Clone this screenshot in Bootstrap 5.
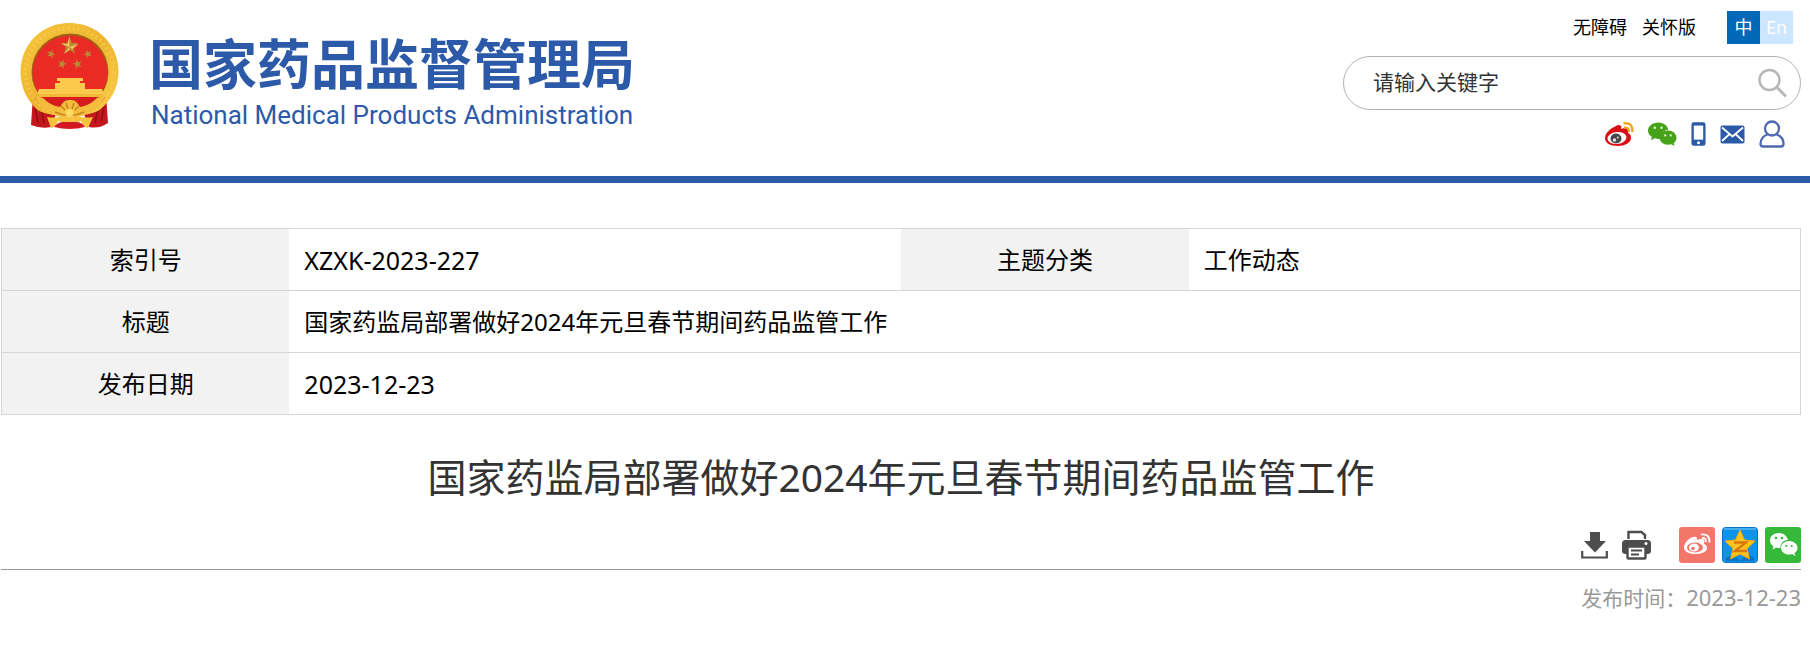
<!DOCTYPE html>
<html lang="zh-CN">
<head>
<meta charset="utf-8">
<meta name="viewport" content="width=device-width, initial-scale=1">
<title>国家药监局部署做好2024年元旦春节期间药品监管工作</title>
<link href="https://cdn.jsdelivr.net/npm/bootstrap@5.3.0/dist/css/bootstrap.min.css" rel="stylesheet">
<style>
body { font-family: "Noto Sans", "Noto Sans CJK SC", sans-serif; color: #000; background: #fff; }
a { color: inherit; text-decoration: none; }
svg { display: block; }
.site-head { border-bottom: 7px solid #2c5aa9; min-height: 183px; padding: 11px 9px 0 20px; }
.brand { padding-top: 11px; gap: 30px; color: #2c5aa9; }
.brand-zh { font: 700 54px/60px "Noto Sans CJK SC", sans-serif; margin-top: 10px; }
.brand-en { font: 400 26px/32px Roboto, "Liberation Sans", sans-serif; margin-top: 7px; padding-left: 2px; }
.tools { width: 458px; }
.top-links { font-size: 18px; line-height: 33px; gap: 15px; padding-right: 8px; }
.lang { margin-left: 16px; }
.lang a { width: 33px; height: 33px; line-height: 33px; text-align: center; color: #fff; background: #cce6ff; }
.lang a.on { background: #0068b7; }
.search-box { height: 54px; border: 1px solid #b3b3b3; border-radius: 27px; margin-top: 12px; padding: 0 13px 0 29px; }
.search-box input { font-size: 21px; border: 0; outline: 0; padding: 0; background: none; min-width: 0; color: #333; }
.search-box input::placeholder { color: #333; opacity: 1; }
.search-box button { border: 0; background: none; padding: 0; }
.social { margin-top: 10px; height: 28px; padding-right: 16px; gap: 14px; }
.article { padding: 45px 9px 0 1px; }
.info { font-size: 24px; table-layout: fixed; border: 1px solid #d5d5d5; margin: 0; }
.info th, .info td { height: 62px; line-height: 32px; padding: 0 15px; vertical-align: middle; border-bottom: 1px solid #d5d5d5; color: #000; font-weight: 400; }
.info th { background: #f2f2f2; text-align: center; }
.info .num { font-size: 25px; }
.headline { font-size: 39px; line-height: 52px; font-weight: 400; color: #333; margin: 36px 0 0; }
.acts { border-bottom: 1px solid #999; margin-top: 24px; padding-bottom: 6px; gap: 14px; }
.acts button { border: 0; background: none; padding: 0; }
.share { gap: 7px; padding-left: 14px; }
.pub { font-size: 21px; line-height: 32px; color: #999; margin: 11px 0 0; }
.pub time { font-size: 22px; }
</style>
</head>
<body>
<svg width="0" height="0" class="position-absolute" aria-hidden="true">
  <defs>
    <polygon id="star" points="0,-10 2.4,-3.2 9.5,-3.1 3.8,1.2 5.9,8.1 0,4 -5.9,8.1 -3.8,1.2 -9.5,-3.1 -2.4,-3.2"/>
    <linearGradient id="gold" x1="0" y1="0" x2="1" y2="1"><stop offset="0" stop-color="#f7c63c"/><stop offset=".5" stop-color="#eeb430"/><stop offset="1" stop-color="#f8ce4a"/></linearGradient>
  </defs>
</svg>

<header class="site-head d-flex justify-content-between align-items-start">
  <a href="#" class="brand d-flex align-items-start">
    <svg width="99" height="107" viewBox="0 0 99 107" role="img" aria-label="国徽">
      <path d="M13 73L11 103q10 4 20 2l5-13h28l5 13q10 2 19-4L86 73z" fill="#c4161c"/>
      <path d="M15 84l3 17M21 86l3 15M84 84l-3 15M78 86l-3 15" stroke="#8f1015" stroke-width="1.5"/>
      <path d="M49.5 1C22 1 .5 22 .5 50c0 16 7 29 17 38 14 8 48 8 62 0 11-9 19-22 19-38C98.500 22 77 1 49.500 1z" fill="url(#gold)"/>
      <circle cx="49.500" cy="50" r="44" fill="none" stroke="#f9cf55" stroke-width="4" stroke-dasharray="2 3" opacity=".6"/>
      <circle cx="50" cy="50" r="38.500" fill="#9c6414"/>
      <circle cx="50" cy="51" r="37.500" fill="#e92a25"/>
      <g fill="#b98b35"><use href="#star" transform="translate(49.500 24) scale(.93)"/><use href="#star" transform="translate(31 32) rotate(20) scale(.45)"/><use href="#star" transform="translate(68 32) rotate(-20) scale(.45)"/><use href="#star" transform="translate(42 42) rotate(15) scale(.5)"/><use href="#star" transform="translate(57.500 42) rotate(-15) scale(.5)"/></g>
      <g fill="#f3c85b"><path d="M49.500 14v11l-8.500-3.500 6.500.5zM49.500 25l-5.500 7 5.500-4zM49.500 25l9-3-6 5z"/></g>
      <path d="M37 56h26v3h-3v2h5v6h17l2 5H17l2-5h16v-6h5v-2h-3z" fill="#fbc94b"/>
      <path d="M19 72h64v3H19z" fill="#f2b838"/>
      <path d="M15 75h70q-4 8-12 13H27q-8-5-12-13z" fill="#d61d1d"/>
      <path d="M14 73l9 3q8 8 17 9 4-8 10-7 6-1 10 7 9-1 17-9l9-3-7 12q-15 10-29 12-16-2-29-12z" fill="#f4bd3c"/>
      <path d="M27 95q12 2 23-3 11 5 23 3l-5 11q-5-1-7-7-5 2-11 2t-12-2q-2 6-7 7z" fill="#f6c23f"/>
      <path d="M34 105q4-5 9-5h13q6 0 9 5-15 4-31 0z" fill="#d21b20"/>
      <path d="M41 84l4 4M46 81l2 6M54 81l-2 6M59 84l-4 4M35 90q15 7 29 0" fill="none" stroke="#c78521" stroke-width="1.500"/>
      <circle cx="49.500" cy="91" r="4" fill="#ffda68"/>
    </svg>
    <span class="d-block">
      <span class="brand-zh d-block">国家药品监督管理局</span>
      <span class="brand-en d-block">National Medical Products Administration</span>
    </span>
  </a>

  <div class="tools">
    <nav class="top-links d-flex justify-content-end">
      <a href="#">无障碍</a>
      <a href="#">关怀版</a>
      <span class="lang d-flex"><a class="on" href="#">中</a><a href="#">En</a></span>
    </nav>
    <form class="search-box d-flex align-items-center">
      <input class="flex-grow-1" type="text" placeholder="请输入关键字" aria-label="请输入关键字">
      <button type="button" aria-label="搜索">
        <svg width="29" height="30" viewBox="0 0 29 30" fill="none" stroke="#b7b7b7"><circle cx="11.500" cy="12" r="10" stroke-width="2.500"/><path d="M19 19.500l9 9" stroke-width="3"/></svg>
      </button>
    </form>
    <div class="social d-flex align-items-center justify-content-end">
      <a href="#" aria-label="微博">
        <svg width="29" height="26" viewBox="0 0 29 26">
          <path d="M11 5q3-2 5 0 1 1 0 3 5-2 7 0 1 1 0 4 3 1 3 5c0 5-7 8-13 8C5 25 0 22 0 17 0 12 6 7 11 5z" fill="#dc0d12"/>
          <ellipse cx="12" cy="17" rx="9.500" ry="6" fill="#fff" transform="rotate(-6 12 17)"/>
          <ellipse cx="11" cy="17.500" rx="5.500" ry="5" fill="#484848"/><circle cx="9.500" cy="19" r="1.800" fill="#ddd"/><circle cx="12.800" cy="16.500" r="1" fill="#ddd"/>
          <path d="M18.500 2.500q9-2 9 8.500M19 6.800q5-1 5 4" fill="none" stroke="#efa81c" stroke-width="2.400"/>
        </svg>
      </a>
      <a href="#" aria-label="微信">
        <svg width="29" height="26" viewBox="0 0 30 26">
          <path d="M10.500 1C4.500 1 0 5 0 9.500c0 3 1.500 5 4 6.500l-1 3.500 4-2q3 1 6 .5C13 12 17 8.500 21 8.500 20 4 16 1 10.500 1z" fill="#46a218"/>
          <path d="M20.500 9.500c-5 0-8.500 3.400-8.500 7.300 0 4.200 4 7.200 8.500 7.200q2 0 3.500-.5l3.500 2-1-3c2-1.400 3-3.400 3-5.700 0-4-4-7.300-9-7.300z" fill="#46a218"/>
          <g fill="#e2f5d5"><circle cx="7" cy="6.500" r="1.300"/><circle cx="14" cy="6.500" r="1.300"/><circle cx="17.800" cy="14.500" r="1.200"/><circle cx="23.500" cy="14.500" r="1.200"/></g>
        </svg>
      </a>
      <a href="#" aria-label="移动端">
        <svg width="15" height="26" viewBox="0 0 16 26"><rect x=".5" y=".5" width="15" height="25" rx="2.500" fill="#2c5aa9"/><path d="M3 4h10v15H3z" fill="#fff"/><circle cx="8" cy="22.300" r="1.600" fill="#fff"/></svg>
      </a>
      <a href="#" aria-label="邮箱">
        <svg width="25" height="19" viewBox="0 0 25 19"><rect x=".5" y=".5" width="24" height="18" rx="2" fill="#2c5aa9"/><path d="M2 2.500l10.500 9 10.500-9M2 16l7.500-7M23 16l-7.500-7" fill="none" stroke="#fff" stroke-width="1.800"/></svg>
      </a>
      <a href="#" aria-label="个人中心">
        <svg width="26" height="28" viewBox="0 0 26 28" fill="none" stroke="#5068b0" stroke-width="2.300"><circle cx="13" cy="8.500" r="7"/><path d="M8.500 14.500C4 16 1.500 20 1.500 24q0 2.500 2.500 2.500h18q2.500 0 2.500-2.500c0-4-2.500-8-7-9.500"/></svg>
      </a>
    </div>
  </div>
</header>

<main class="article">
  <table class="info w-100">
    <colgroup><col style="width:16%"><col style="width:34%"><col style="width:16%"><col style="width:34%"></colgroup>
    <tbody>
      <tr><th scope="row">索引号</th><td class="num">XZXK-2023-227</td><th scope="row">主题分类</th><td>工作动态</td></tr>
      <tr><th scope="row">标题</th><td colspan="3">国家药监局部署做好2024年元旦春节期间药品监管工作</td></tr>
      <tr><th scope="row">发布日期</th><td class="num" colspan="3">2023-12-23</td></tr>
    </tbody>
  </table>

  <h1 class="headline text-center">国家药监局部署做好2024年元旦春节期间药品监管工作</h1>

  <div class="acts d-flex justify-content-end align-items-center">
    <button type="button" aria-label="下载">
      <svg width="27" height="28" viewBox="0 0 27 28"><path d="M9 1h10v9h6L14 21.500 3 10h6z" fill="#4d4d4d"/><path d="M1.200 20v6.500h24.600V20" fill="none" stroke="#4d4d4d" stroke-width="2.200"/></svg>
    </button>
    <button type="button" aria-label="打印">
      <svg width="29" height="30" viewBox="0 0 29 30"><path d="M6.500 9V2h13l3.500 3v4" fill="none" stroke="#4d4d4d" stroke-width="2.400"/><rect y="10" width="29" height="14" rx="3.500" fill="#4d4d4d"/><rect x="5.500" y="16.500" width="18" height="12" rx="1" fill="#fff" stroke="#4d4d4d" stroke-width="2.400"/><path d="M9 20.500h11M9 24.500h8" stroke="#4d4d4d" stroke-width="1.800"/><circle cx="24" cy="13.500" r="1.500" fill="#fff"/></svg>
    </button>
    <span class="share d-flex">
      <a href="#" aria-label="分享到微博">
        <svg width="36" height="36" viewBox="0 0 36 36"><rect width="36" height="36" rx="3" fill="#f4766a"/>
          <path d="M14 10q3-1 4 1v2q5-2 7 0 1 1 0 4 3 1 3 4c0 4-6 6-12 6S5 24.500 5 20.500C5 16 10 11 14 10z" fill="#fff"/>
          <ellipse cx="16" cy="20.500" rx="8" ry="5" fill="#f4766a"/><ellipse cx="15" cy="20.500" rx="5" ry="4" fill="#fff"/><circle cx="14" cy="21.500" r="1.800" fill="#f4766a"/>
          <path d="M22 7.500q9-1 8.500 8M23 11q4-.5 4 4" fill="none" stroke="#fff" stroke-width="1.900"/></svg>
      </a>
      <a href="#" aria-label="分享到QQ空间">
        <svg width="36" height="36" viewBox="0 0 36 36"><rect x=".5" y=".5" width="35" height="35" rx="3" fill="#0f93e8" stroke="#0873c4"/><path d="M2 2h32" stroke="#7cc8f7"/><path d="M4 31l8-4 6 7 8-7 6 4v3H4z" fill="#0873c4"/>
          <polygon points="18,3 22.500,13 33,14 25,21.500 27.500,32 18,27 8.500,32 11,21.500 3,14 13.500,13" fill="#ffc320" stroke="#f6a80c" stroke-linejoin="round"/>
          <path d="M12 15.500h12L13 24h12" fill="none" stroke="#d7790c" stroke-width="2.400"/></svg>
      </a>
      <a href="#" aria-label="分享到微信">
        <svg width="36" height="36" viewBox="0 0 36 36"><rect width="36" height="36" rx="3" fill="#36b93b"/>
          <path d="M14 6C8.500 6 5 9.500 5 13.500c0 2.500 1.500 4.500 3.500 6l-1 3 4-2q2 .7 4 .5C15 16 19 13 23 13c-1-4-4.500-7-9-7z" fill="#fff"/>
          <path d="M24 14c-4.500 0-8 3-8 6.700 0 3.800 3.500 6.800 8 6.800q1.500 0 3-.5l3.500 2-1-3c2-1.200 3-3 3-5.300 0-3.700-4-6.700-8.500-6.700z" fill="#fff"/>
          <g fill="#36b93b"><circle cx="11" cy="11" r="1.300"/><circle cx="17" cy="11" r="1.300"/><circle cx="21.300" cy="19" r="1.100"/><circle cx="26.700" cy="19" r="1.100"/></g></svg>
      </a>
    </span>
  </div>
  <p class="pub text-end">发布时间：<time datetime="2023-12-23">2023-12-23</time></p>
</main>
<script src="https://cdn.jsdelivr.net/npm/bootstrap@5.3.0/dist/js/bootstrap.bundle.min.js"></script>
</body>
</html>
